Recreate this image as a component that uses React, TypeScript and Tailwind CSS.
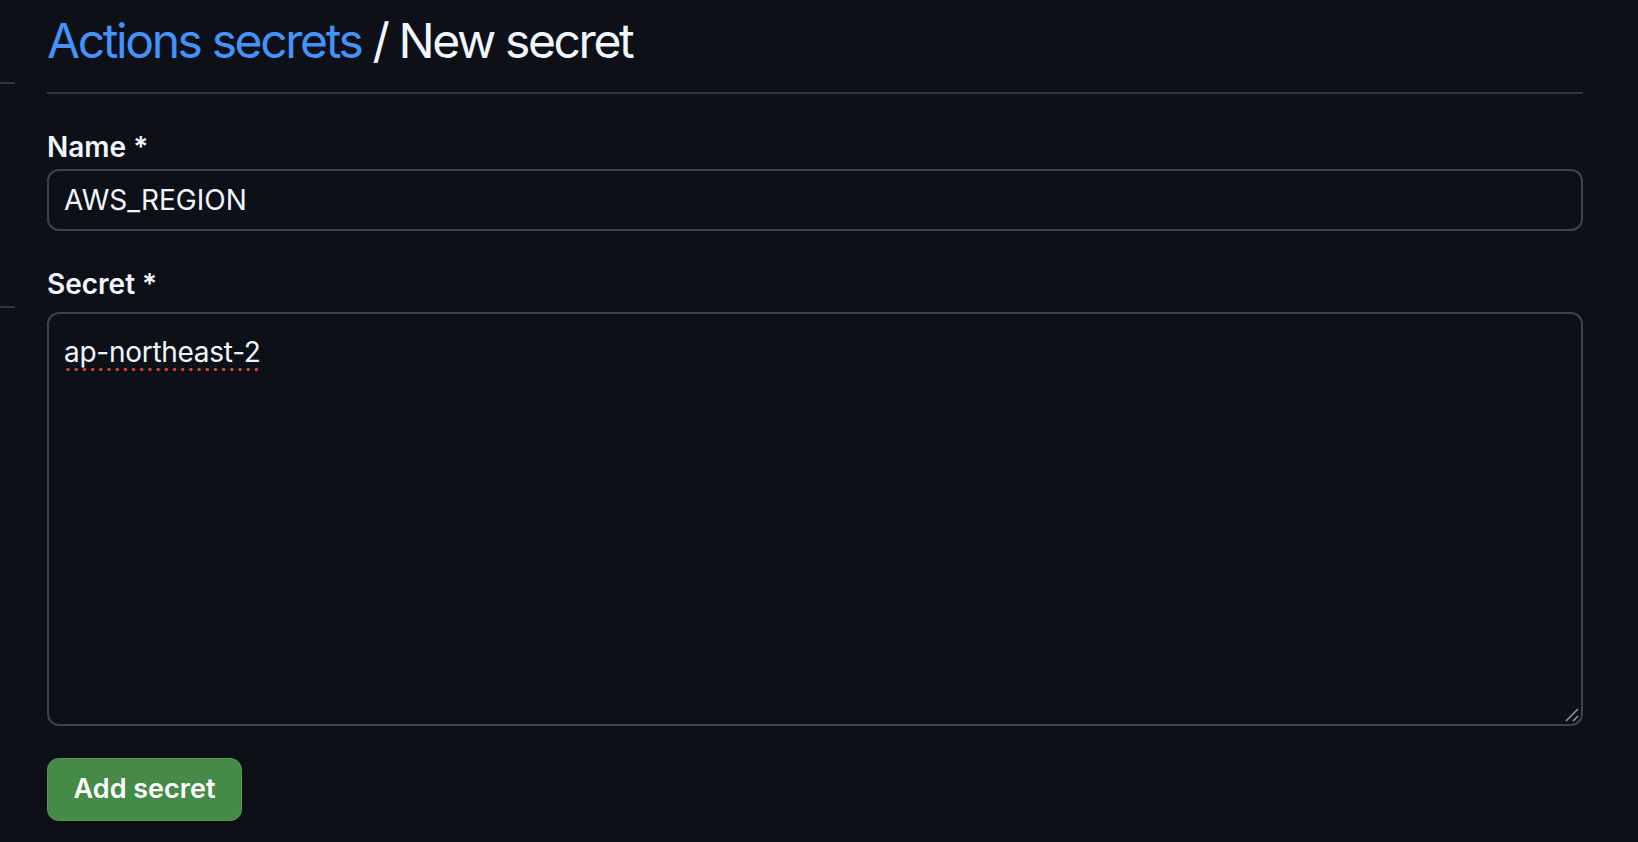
export default function App() {
  return (
    <div className="flex h-screen w-full overflow-hidden bg-[#0d1117] font-['Inter',sans-serif] text-[#f0f6fc]">
      {/* cut-off settings sidebar */}
      <div className="flex w-[15px] shrink-0 flex-col">
        <div className="mt-[82px] h-[2px] bg-[#30363d]"></div>
        <div className="mt-[222px] h-[2px] bg-[#30363d]"></div>
      </div>

      <main className="ml-[32px] w-[1536px] shrink-0">
        <div className="border-b-2 border-[#30363d] pt-[11px] pb-[21px]">
          <h2 className="text-[48px] leading-[60px] font-normal tracking-[-0.05em]">
            <a className="text-[#4493f8]" href="#">Actions secrets</a> / New secret
          </h2>
        </div>

        <form>
          <label className="mt-[35px] block text-[28px] leading-[36px] font-semibold">Name *</label>
          <div className="mt-[4px] flex h-[62px] items-center rounded-[12px] border-2 border-[#3d444d] pl-[15px] text-[28px]">
            AWS_REGION
          </div>

          <label className="mt-[35px] block text-[28px] leading-[36px] font-semibold">Secret *</label>
          <div className="relative mt-[10px] h-[414px] rounded-[12px] border-2 border-[#3d444d] pt-[20px] pl-[15px] text-[28px] leading-[36px] tracking-[-0.01em]">
            <span className="bg-[radial-gradient(circle,#d2453c_1.6px,transparent_1.9px)] bg-[length:8.2px_5px] bg-bottom-left bg-repeat-x pb-[3px]">
              ap-northeast-2
            </span>
            <svg className="absolute right-[2px] bottom-[2px]" width="14" height="14" viewBox="0 0 14 14">
              <path d="M1 13 L13 1 M8 13 L13 8" stroke="#8b949e" strokeWidth="1.6" fill="none" />
            </svg>
          </div>

          <button
            type="button"
            className="mt-[32px] flex h-[63px] w-[195px] items-center justify-center rounded-[12px] border border-[#ffffff1a] bg-[#458a47] text-[27px] font-semibold text-white shadow-[0_1px_0_rgba(0,0,0,0.3)]"
          >
            Add secret
          </button>
        </form>
      </main>
    </div>
  )
}
